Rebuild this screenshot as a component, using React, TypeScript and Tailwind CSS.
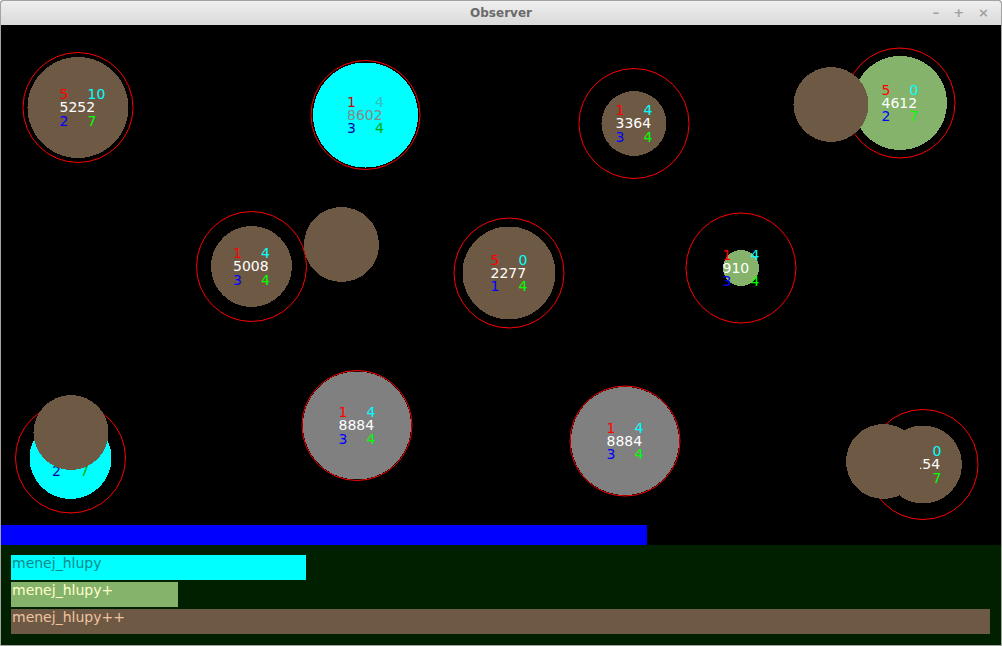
import React from "react";

const BROWN = "#6e5944";
const GREEN = "#85b36b";
const CYAN = "#00ffff";
const GRAY = "#808080";

type Player = {
  cx: number;
  cy: number;
  r: number;
  fill: string;
  ring?: number;
  tl?: [string, string];
  tr?: [string, string];
  mid?: [string, string];
  bl?: [string, string];
  br?: [string, string];
};

const players: Player[] = [
  { cx: 78, cy: 107.5, r: 50.5, fill: BROWN, tl: ["5", "#ff0000"], tr: ["10", "#00ffff"], mid: ["5252", "#ffffff"], bl: ["2", "#0000ff"], br: ["7", "#00ff00"] },
  { cx: 365.5, cy: 115, r: 52.5, fill: CYAN, ring: 54.5, tl: ["1", "#cc0000"], tr: ["4", "#33c0c0"], mid: ["8602", "#888888"], bl: ["3", "#0000aa"], br: ["4", "#00aa00"] },
  { cx: 634, cy: 123.5, r: 32.5, fill: BROWN, tl: ["1", "#ff0000"], tr: ["4", "#00ffff"], mid: ["3364", "#ffffff"], bl: ["3", "#0000ff"], br: ["4", "#00ff00"] },
  { cx: 900, cy: 103, r: 47, fill: GREEN, tl: ["5", "#ff0000"], tr: ["0", "#00ffff"], mid: ["4612", "#ffffff"], bl: ["2", "#0000ff"], br: ["7", "#00ff00"] },
  { cx: 251.5, cy: 266.5, r: 40.5, fill: BROWN, tl: ["1", "#ff0000"], tr: ["4", "#00ffff"], mid: ["5008", "#ffffff"], bl: ["3", "#0000ff"], br: ["4", "#00ff00"] },
  { cx: 509, cy: 273, r: 46.5, fill: BROWN, tl: ["5", "#ff0000"], tr: ["0", "#00ffff"], mid: ["2277", "#ffffff"], bl: ["1", "#0000ff"], br: ["4", "#00ff00"] },
  { cx: 741, cy: 268, r: 18, fill: GREEN, tl: ["1", "#ff0000"], tr: ["4", "#00ffff"], mid: ["910", "#ffffff"], bl: ["3", "#0000ff"], br: ["4", "#00ff00"] },
  { cx: 70.5, cy: 458, r: 41, fill: CYAN, bl: ["2", "#0000aa"], br: ["7", "#00aa00"] },
  { cx: 357, cy: 425.5, r: 54, fill: GRAY, tl: ["1", "#ff0000"], tr: ["4", "#00ffff"], mid: ["8884", "#ffffff"], bl: ["3", "#0000ff"], br: ["4", "#00ff00"] },
  { cx: 625, cy: 441, r: 54, fill: GRAY, tl: ["1", "#ff0000"], tr: ["4", "#00ffff"], mid: ["8884", "#ffffff"], bl: ["3", "#0000ff"], br: ["4", "#00ff00"] },
  { cx: 923, cy: 464.5, r: 39, fill: BROWN, tl: ["5", "#ff0000"], tr: ["0", "#00ffff"], mid: ["2254", "#ffffff"], bl: ["2", "#0000ff"], br: ["7", "#00ff00"] },
];

const food = [
  { cx: 831, cy: 104.5, r: 37.5 },
  { cx: 341.5, cy: 244.5, r: 37.5 },
  { cx: 71, cy: 432.5, r: 37.5 },
  { cx: 883.5, cy: 461.5, r: 37.5 },
];

function Label({ x, y, t }: { x: number; y: number; t?: [string, string] }) {
  if (!t) return null;
  return (
    <text x={x} y={y} fill={t[1]} fontSize={14} fontFamily="'DejaVu Sans', sans-serif">
      {t[0]}
    </text>
  );
}

function Arena() {
  return (
    <svg width={1000} height={500} viewBox="1 25 1000 500" className="block">
      {players.map((p, i) => (
        <g key={i}>
          <circle cx={p.cx} cy={p.cy} r={p.ring ?? 55} fill="none" stroke="#ff0000" strokeWidth={1} />
          <circle cx={p.cx} cy={p.cy} r={p.r} fill={p.fill} shapeRendering="crispEdges" />
          <Label x={p.cx - 18.5} y={p.cy - 8.5} t={p.tl} />
          <Label x={p.cx + 9.5} y={p.cy - 8.5} t={p.tr} />
          <Label x={p.cx - 18.5} y={p.cy + 4.5} t={p.mid} />
          <Label x={p.cx - 18.5} y={p.cy + 18} t={p.bl} />
          <Label x={p.cx + 9.5} y={p.cy + 18} t={p.br} />
        </g>
      ))}
      {food.map((f, i) => (
        <circle key={i} cx={f.cx} cy={f.cy} r={f.r} fill={BROWN} shapeRendering="crispEdges" />
      ))}
    </svg>
  );
}

export default function App() {
  return (
    <div className="w-[1002px] h-[646px] flex flex-col border border-[#a3a3a3] rounded-t-[3px] overflow-hidden bg-black font-['DejaVu_Sans',sans-serif]">
      <div className="h-[24px] shrink-0 relative flex items-center justify-center bg-gradient-to-b from-[#efefef] to-[#d9d9d9]">
        <span className="text-[12px] font-bold text-[#6a6a6a] font-['DejaVu_Sans',sans-serif]">Observer</span>
        <div className="absolute right-[12px] top-0 h-full flex items-center gap-[14px] text-[#a0a0a0] text-[13px] font-bold">
          <span>–</span>
          <span>+</span>
          <span>×</span>
        </div>
      </div>
      <div className="h-[520px] shrink-0 bg-black flex flex-col">
        <Arena />
        <div className="h-[20px] w-[646px] bg-[#0000ff]" />
      </div>
      <div className="flex-1 bg-[#002000] pt-[10px] pl-[10px] flex flex-col gap-[2px]">
        <div className="h-[25px] w-[295px] bg-[#00ffff] text-[#0a8a8a] text-[14px] leading-[17px] pl-[1px]">menej_hlupy</div>
        <div className="h-[25px] w-[167px] bg-[#85b36b] text-[#ffffcc] text-[14px] leading-[17px] pl-[1px]">menej_hlupy+</div>
        <div className="h-[25px] w-[979px] bg-[#6e5944] text-[#f0c4a0] text-[14px] leading-[17px] pl-[1px]">menej_hlupy++</div>
      </div>
    </div>
  );
}
